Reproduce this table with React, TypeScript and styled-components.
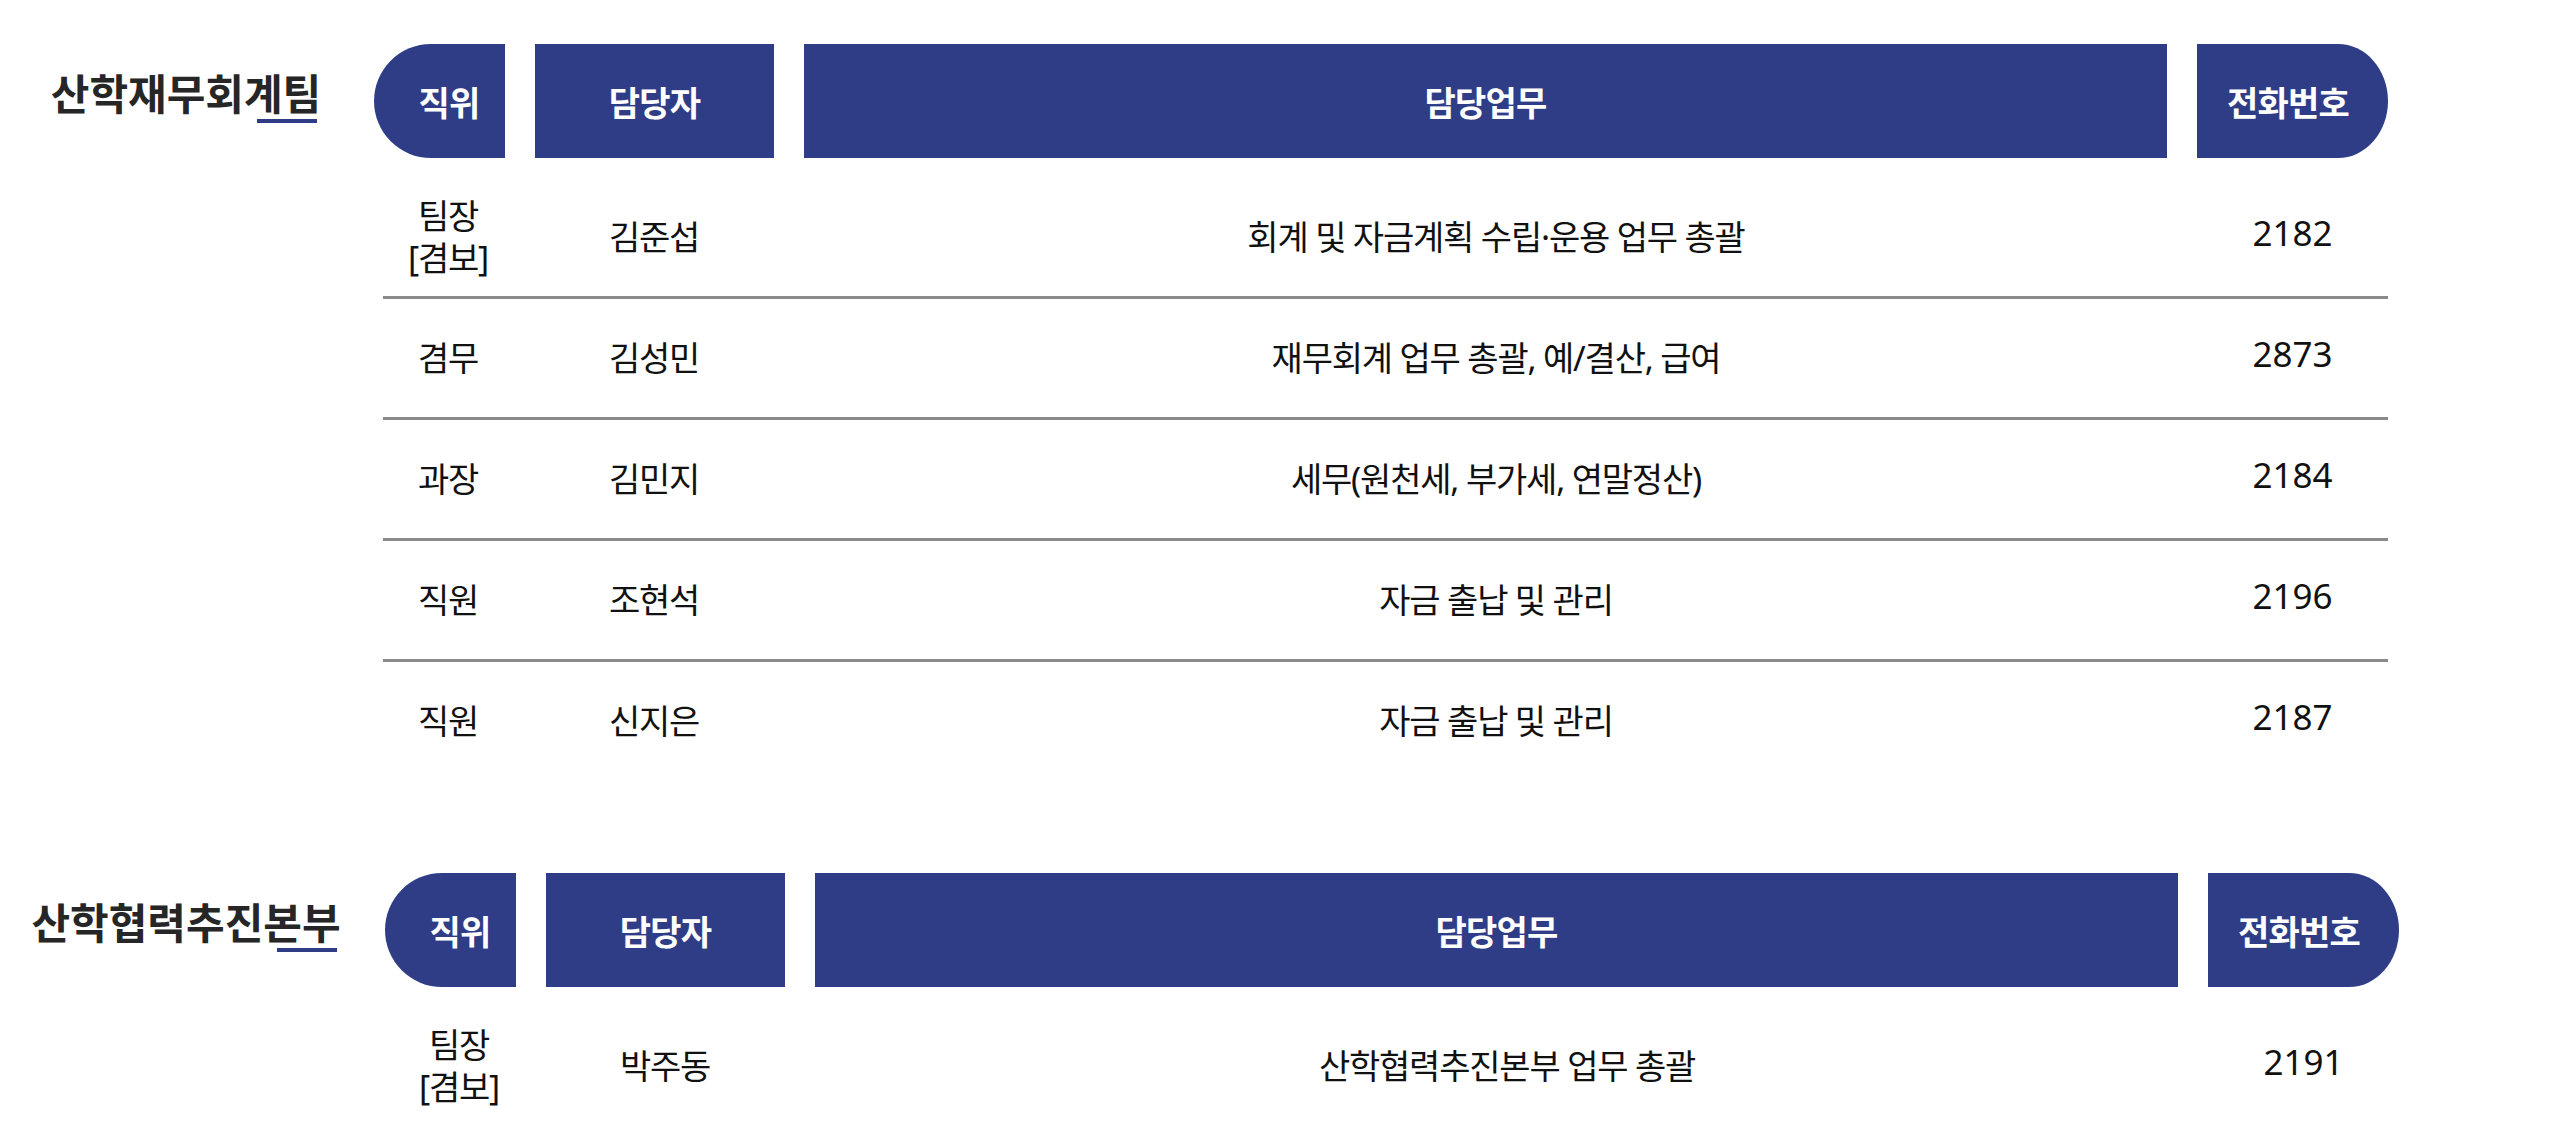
import React from 'react';
import styled, { createGlobalStyle } from 'styled-components';

type Member = {
  position: string[];
  name: string;
  duty: string;
  tel: string;
};

type Team = {
  title: string;
  offset: number;
  members: Member[];
};

const teams: Team[] = [
  {
    title: '산학재무회계팀',
    offset: 2,
    members: [
      { position: ['팀장', '[겸보]'], name: '김준섭', duty: '회계 및 자금계획 수립·운용 업무 총괄', tel: '2182' },
      { position: ['겸무'], name: '김성민', duty: '재무회계 업무 총괄, 예/결산, 급여', tel: '2873' },
      { position: ['과장'], name: '김민지', duty: '세무(원천세, 부가세, 연말정산)', tel: '2184' },
      { position: ['직원'], name: '조현석', duty: '자금 출납 및 관리', tel: '2196' },
      { position: ['직원'], name: '신지은', duty: '자금 출납 및 관리', tel: '2187' },
    ],
  },
  {
    title: '산학협력추진본부',
    offset: 13,
    members: [
      { position: ['팀장', '[겸보]'], name: '박주동', duty: '산학협력추진본부 업무 총괄', tel: '2191' },
    ],
  },
];

const NAVY = '#2f3d87';

const GlobalStyle = createGlobalStyle`
  html, body {
    margin: 0;
    padding: 0;
    background: #fff;
  }
  body {
    font-family: 'Noto Sans CJK KR', 'Noto Sans', sans-serif;
    color: #111;
  }
`;

// Component
function TeamTable({ team }: { team: Team }) {
  return (
    <StyledSection>
      <StyledTitleCol>
        <StyledTitle>{team.title}</StyledTitle>
      </StyledTitleCol>
      <StyledTable $offset={team.offset}>
        <StyledHead>
          <StyledHeadCell $shape="left">직위</StyledHeadCell>
          <StyledHeadCell>담당자</StyledHeadCell>
          <StyledHeadCell>담당업무</StyledHeadCell>
          <StyledHeadCell $shape="right">전화번호</StyledHeadCell>
        </StyledHead>
        <StyledBody>
          {team.members.map((m, i) => (
            <StyledRow key={i}>
              <StyledCell>
                <div>
                  {m.position.map((p) => (
                    <div key={p}>{p}</div>
                  ))}
                </div>
              </StyledCell>
              <StyledCell>{m.name}</StyledCell>
              <StyledCell>{m.duty}</StyledCell>
              <StyledTel>{m.tel}</StyledTel>
            </StyledRow>
          ))}
        </StyledBody>
      </StyledTable>
    </StyledSection>
  );
}

export default function App() {
  return (
    <>
      <GlobalStyle />
      <StyledPage>
        {teams.map((t) => (
          <TeamTable key={t.title} team={t} />
        ))}
      </StyledPage>
    </>
  );
}

// Styled components
const StyledPage = styled.main`
  display: flex;
  flex-direction: column;
  gap: 93px;
  padding-top: 44px;
  width: 2560px;
`;

const StyledSection = styled.section`
  display: flex;
  align-items: flex-start;
`;

const StyledTitleCol = styled.div`
  width: 372px;
  height: 114px;
  flex-shrink: 0;
  display: flex;
  align-items: center;
  justify-content: center;
  padding-bottom: 19px;
  box-sizing: border-box;
`;

const StyledTitle = styled.h2`
  position: relative;
  margin: 0;
  font-size: 42px;
  line-height: 1;
  font-weight: 700;
  letter-spacing: 0;
  color: #262626;

  &::after {
    content: '';
    position: absolute;
    right: 4px;
    bottom: -10px;
    width: 60px;
    height: 4px;
    background: ${NAVY};
  }
`;

const StyledTable = styled.div<{ $offset: number }>`
  margin-left: ${(p) => p.$offset}px;
  width: 2014px;
`;

const StyledHead = styled.div`
  display: grid;
  grid-template-columns: 131px 239px 1363px 191px;
  column-gap: 30px;
  height: 114px;
`;

const StyledHeadCell = styled.div<{ $shape?: 'left' | 'right' }>`
  display: flex;
  align-items: center;
  justify-content: center;
  background: ${NAVY};
  color: #fff;
  font-size: 34px;
  font-weight: 700;
  letter-spacing: -0.8px;
  padding-left: ${(p) => (p.$shape === 'left' ? '19px' : '0')};
  padding-right: ${(p) => (p.$shape === 'right' ? '9px' : '0')};
  border-radius: ${(p) =>
    p.$shape === 'left'
      ? '57px 0 0 57px'
      : p.$shape === 'right'
        ? '0 50px 50px 0 / 0 57px 57px 0'
        : '0'};
`;

const StyledBody = styled.div`
  margin-top: 20px;
  margin-left: 9px;
`;

const StyledRow = styled.div`
  display: grid;
  grid-template-columns: 130px 282px 1402px 191px;
  height: 121px;
  box-sizing: border-box;
  border-bottom: 3px solid #8a8a8a;

  &:last-child {
    border-bottom: none;
    height: 118px;
  }
`;

const StyledCell = styled.div`
  display: flex;
  align-items: center;
  justify-content: center;
  text-align: center;
  font-family: 'Noto Sans', 'Noto Sans CJK KR', sans-serif;
  font-size: 34px;
  line-height: 42px;
  letter-spacing: -1.2px;
  color: #111;
`;

const StyledTel = styled(StyledCell)`
  font-size: 35px;
  letter-spacing: 0;
  padding-bottom: 8px;
`;
